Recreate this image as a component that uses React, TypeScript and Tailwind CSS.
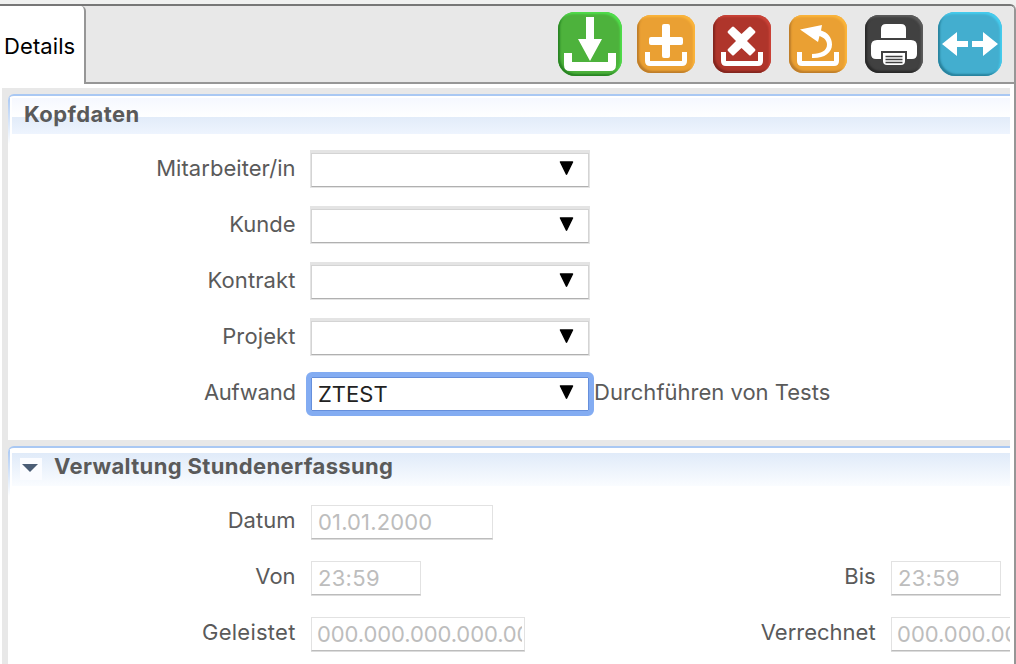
import type { ReactNode } from 'react';

const shades = {
  green: 'size-16 rounded-[17px] bg-[#4db23c] shadow-[inset_-2px_2px_2px_#4fdf4b,inset_2px_-2px_2px_#288323]',
  orange: 'size-[58px] rounded-[14px] bg-[#eaa033] shadow-[inset_-2px_2px_2px_#fbb53b,inset_2px_-2px_2px_#bd7d2b]',
  red: 'size-[58px] rounded-[14px] bg-[#af352b] shadow-[inset_-2px_2px_2px_#cb4338,inset_2px_-2px_2px_#82251e]',
  dark: 'size-[58px] rounded-[14px] bg-[#414141] shadow-[inset_-2px_2px_2px_#5c5c5c,inset_2px_-2px_2px_#292929]',
  blue: 'size-16 rounded-[17px] bg-[#43aecf] shadow-[inset_-2px_2px_2px_#45cdef,inset_2px_-2px_2px_#28829d]',
};

function Tool({ shade, label, children }: { shade: keyof typeof shades; label: string; children: ReactNode }) {
  return (
    <button aria-label={label} className={`block shrink-0 ${shades[shade]}`}>
      {children}
    </button>
  );
}

function Toolbar() {
  return (
    <div className="flex h-[76px] flex-1 items-center rounded-tr-[5px] bg-[#e8e8e8] pl-[472px]">
      <Tool shade="green" label="Sichern">
        <svg width="64" height="64" viewBox="0 0 64 64" fill="#fff">
          <path d="M28 5h8v22h8L32 49 20 27h8Z" />
          <path d="M6 41h8v9h36v-9h8v12q0 6-6 6H12q-6 0-6-6Z" />
        </svg>
      </Tool>
      <div className="w-[15px]" />
      <Tool shade="orange" label="Anlegen">
        <svg width="58" height="58" viewBox="0 0 58 58" fill="#fff">
          <path d="M27 9h4q2 0 2 2v11h11q2 0 2 2v4q0 2-2 2H33v11q0 2-2 2h-4q-2 0-2-2V30H14q-2 0-2-2v-4q0-2 2-2h11V11q0-2 2-2Z" />
          <path d="M8 37h5v9h32v-9h5v9q0 5-5 5H13q-5 0-5-5Z" />
        </svg>
      </Tool>
      <div className="w-[18px]" />
      <Tool shade="red" label="Löschen">
        <svg width="58" height="58" viewBox="0 0 58 58" fill="#fff">
          <path d="m21 12 7.500 7 7.500-7q1-1 2 0l4 4q1 1 0 2l-8 8 8 8q1 1 0 2l-4 4q-1 1-2 0l-7.500-7-7.500 7q-1 1-2 0l-4-4q-1-1 0-2l8-8-8-8q-1-1 0-2l4-4q1-1 2 0Z" />
          <path d="M8 37h5v9h32v-9h5v9q0 5-5 5H13q-5 0-5-5Z" />
        </svg>
      </Tool>
      <div className="w-[18px]" />
      <Tool shade="orange" label="Zurücksetzen">
        <svg width="58" height="58" viewBox="0 0 58 58" fill="#fff">
          <path d="M11 14.500 33 10l-1 5.500C39 17.500 43 23 43 29.500 43 38 35 43.500 23 43v-4C32 39 38 35.500 38 29.500c0-4-3-7-7.500-8.500L29 27Z" />
          <path d="M8 37h5v9h32v-9h5v9q0 5-5 5H13q-5 0-5-5Z" />
        </svg>
      </Tool>
      <div className="w-[18px]" />
      <Tool shade="dark" label="Drucken">
        <svg width="58" height="58" viewBox="0 0 58 58" fill="#fff">
          <path d="M21 9h15q5 0 5 5v9H16v-9q0-5 5-5Z" />
          <path d="M12 25h34q6 0 6 6v8q0 5-5 5h-5v-8H16v8h-5q-5 0-5-5v-8q0-6 6-6Z" />
          <path d="M18 38h22v8q0 4-4 4H22q-4 0-4-4Z" />
          <path d="M20.500 41.500h17M20.500 44.500h17M20.500 47.500h17" stroke="#414141" strokeWidth="1.300" />
        </svg>
      </Tool>
      <div className="w-[15px]" />
      <Tool shade="blue" label="Breite anpassen">
        <svg width="64" height="64" viewBox="0 0 64 64" fill="#fff">
          <path d="M4 32 19 20v9h11v6H19v9ZM60 32 45 20v9H34v6h11v9Z" />
        </svg>
      </Tool>
    </div>
  );
}

function Label({ className, children }: { className: string; children: ReactNode }) {
  return <div className={`shrink-0 pr-[0.400px] text-right whitespace-nowrap text-[#5a5a5a] ${className}`}>{children}</div>;
}

function Arrow() {
  return (
    <svg width="15" height="14" viewBox="0 0 15 14" className="-mt-[3px] shrink-0">
      <path d="M1.500 1h12L7.500 13.200Z" stroke="#000" strokeWidth="1.500" strokeLinejoin="round" />
    </svg>
  );
}

function Combo() {
  return (
    <div className="mt-[2px] ml-[14px] flex h-[38px] w-[280px] border-x border-t-[3px] border-b border-[#e4e4e4]">
      <div className="flex flex-1 items-center justify-end border border-[#d4d4d4] border-b-[#b0b0b0] bg-white pr-[14px] pb-px">
        <Arrow />
      </div>
    </div>
  );
}

function FocusedCombo({ value }: { value: string }) {
  return (
    <div className="z-10 mt-[3px] ml-[10px] flex h-[44px] w-[288px] items-center justify-between rounded-[6px] border-[5px] border-[#83acf2] bg-white pr-[15px] pl-[7px] text-[#222] shadow-[inset_0_0_0_1px_#668fdb]">
      <span className="mt-px">{value}</span>
      <Arrow />
    </div>
  );
}

function Disabled({ value, className }: { value: string; className: string }) {
  return (
    <div className={`mt-[3px] flex h-[34px] shrink-0 items-center border border-[#e2e2e2] border-b-[#bcbcbc] bg-white pr-[2px] whitespace-nowrap text-[#bdbdbd] shadow-[0_1px_0_#dcdcdc] ${className}`}>
      <span className="overflow-hidden">{value}</span>
    </div>
  );
}

const groupClass =
  'relative overflow-hidden rounded-tl-[6px] border-t-2 border-[#a9c8f3] bg-white before:absolute before:top-0 before:left-0 before:h-[48px] before:w-[2px] before:bg-linear-to-b before:from-[#a9c8f3] before:to-white';

const fields = [
  { name: 'Mitarbeiter/in', tracking: 'tracking-[0.050px]' },
  { name: 'Kunde', tracking: 'tracking-normal' },
  { name: 'Kontrakt', tracking: 'tracking-[0.120px]' },
  { name: 'Projekt', tracking: 'tracking-[0.120px]' },
];

export default function App() {
  return (
    <div className="flex h-[664px] w-[1016px] flex-col overflow-hidden bg-[#f0f1f0] pt-1 font-['Inter',sans-serif] text-[22px] leading-[28px]">
      <div className="flex h-[660px] flex-col rounded-tr-[6px] border-t-2 border-r-2 border-t-[#777] border-r-[#969696] bg-white">
        <div className="flex h-[78px] shrink-0 rounded-tr-[5px] bg-[linear-gradient(90deg,#fff_60px,#e8e8e8_60px)]">
          <div className="h-[78px] w-[86px] shrink-0 rounded-tr-[5px] border-r-2 border-[#969696] bg-white pt-[26px] pl-1 whitespace-nowrap text-black">
            <span className="tracking-[0.100px]">Details</span>
          </div>
          <div className="flex h-[78px] flex-1 overflow-hidden rounded-tr-[5px] border-b-2 border-[#969696]">
            <Toolbar />
          </div>
        </div>
        <main className="mt-1 mr-1 ml-0.5 flex h-[576px] flex-col gap-[6px] overflow-hidden bg-[#e8e8e8] pt-[6px] pl-[6px]">
          <section className={`h-[346px] shrink-0 ${groupClass}`}>
            <h2 className="mt-[2px] ml-1 h-9 bg-[linear-gradient(#f5f8ff_0px,#ffffff_19px,#e2ecf9_19px,#eef4fe_36px)] pt-[2px] pl-3 font-bold tracking-[0.400px] text-[#5a5a5a]">
              Kopfdaten
            </h2>
            <div className="mt-[6px]">
              {fields.map(({ name, tracking }) => (
                <div key={name} className="flex h-14 items-center">
                  <Label className={`w-[288px] ${tracking}`}>{name}</Label>
                  <Combo />
                </div>
              ))}
              <div className="flex h-14 items-center">
                <Label className="w-[288px] tracking-[-0.250px]">Aufwand</Label>
                <FocusedCombo value="ZTEST" />
                <span className="whitespace-nowrap text-[#5a5a5a]">Durchführen von Tests</span>
              </div>
            </div>
          </section>
          <section className={`h-[240px] shrink-0 ${groupClass}`}>
            <div className="mt-[5px] ml-1 flex h-[33px] bg-linear-to-b from-[#e0ebf9] to-[#fafcff]">
              <div className="mt-[5px] ml-2 flex size-[22px] shrink-0 items-center bg-[#fbfcff] pl-[2px]">
                <svg width="16" height="8" viewBox="0 0 16 8" className="-mt-[3px]">
                  <path d="M0 0h16L8 8Z" fill="#4b5d75" />
                </svg>
              </div>
              <h2 className="-mt-px ml-3 font-bold tracking-[0.360px] whitespace-nowrap text-[#5a5a5a]">
                Verwaltung Stundenerfassung
              </h2>
            </div>
            <div className="mt-[6px]">
              <div className="flex h-14 items-center">
                <Label className="w-[288px] tracking-[0.050px]">Datum</Label>
                <Disabled value="01.01.2000" className="ml-[15px] w-[182px] pl-[6px] tracking-[0.150px]" />
              </div>
              <div className="flex h-14 items-center">
                <Label className="w-[288px] tracking-normal">Von</Label>
                <Disabled value="23:59" className="ml-[15px] w-[110px] pl-[6px] tracking-[0.300px]" />
                <Label className="w-[455px] tracking-normal">Bis</Label>
                <Disabled value="23:59" className="ml-[15px] w-[110px] pl-[6px] tracking-[0.300px]" />
              </div>
              <div className="flex h-14 items-center">
                <Label className="w-[288px] tracking-[0.250px]">Geleistet</Label>
                <Disabled value="000.000.000.000.000" className="ml-[15px] w-[214px] pl-[5px] tracking-[-0.100px]" />
                <Label className="w-[351px] tracking-normal">Verrechnet</Label>
                <Disabled value="000.000.000" className="ml-[15px] w-[180px] pl-[5px] tracking-normal" />
              </div>
            </div>
          </section>
        </main>
      </div>
    </div>
  );
}
